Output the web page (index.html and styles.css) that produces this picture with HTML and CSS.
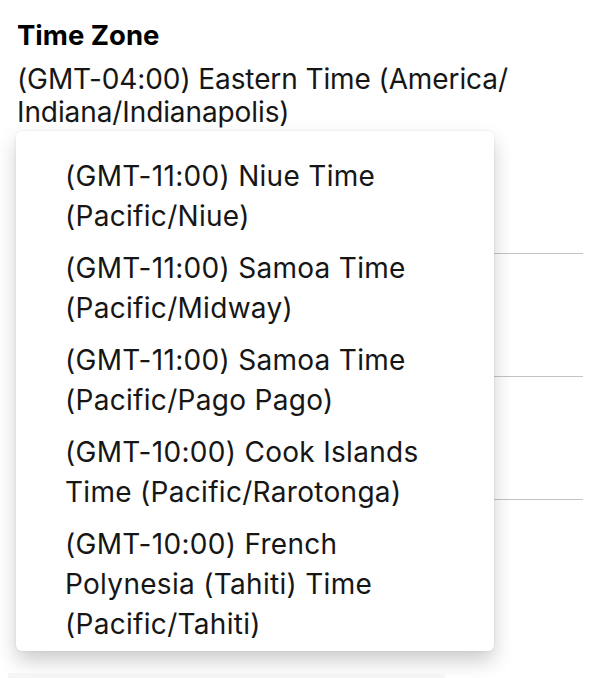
FILE: index.html
```html
<!DOCTYPE html>
<html>
<head>
<meta charset="utf-8">
<link rel="stylesheet" href="styles.css">
</head>
<body>
<div class="page">
  <h1 class="title">Time Zone</h1>
  <div class="value">(GMT-04:00) Eastern Time (America/ Indiana/Indianapolis)</div>
  <div class="fields">
    <div class="field"></div>
    <div class="field"></div>
    <div class="field"></div>
  </div>
  <ul class="menu">
    <li class="item">(GMT-11:00) Niue Time (Pacific/Niue)</li>
    <li class="item">(GMT-11:00) Samoa Time (Pacific/Midway)</li>
    <li class="item">(GMT-11:00) Samoa Time (Pacific/Pago Pago)</li>
    <li class="item">(GMT-10:00) Cook Islands Time (Pacific/Rarotonga)</li>
    <li class="item">(GMT-10:00) French Polynesia (Tahiti) Time (Pacific/Tahiti)</li>
  </ul>
  <div class="bottom-strip"></div>
</div>
</body>
</html>
```
FILE: styles.css
```css
html, body {
  margin: 0;
  padding: 0;
  background: #fff;
}
body {
  font-family: Inter, "Noto Sans", sans-serif;
  color: #111;
  width: 596px;
  height: 678px;
  overflow: hidden;
}
.page {
  position: relative;
  height: 678px;
  padding-left: 17px;
  box-sizing: border-box;
}
.title {
  margin: 0;
  padding-top: 19px;
  font-size: 27.5px;
  font-weight: 700;
  line-height: 32px;
  color: #000;
}
.value {
  margin-top: 12px;
  font-size: 28px;
  font-weight: 400;
  letter-spacing: -0.1px;
  line-height: 33px;
  width: 540px;
  color: #161616;
}
.fields {
  width: 566px;
  margin-top: 2px;
}
.field {
  height: 122px;
  border-bottom: 1px solid #c4c4c4;
}
.menu {
  position: absolute;
  top: 131px;
  left: 16px;
  width: 478px;
  margin: 0;
  padding: 19px 54px 1px 49px;
  box-sizing: border-box;
  list-style: none;
  background: #fff;
  border-radius: 6px;
  box-shadow: 0 10px 20px rgba(0, 0, 0, 0.2), 0 0 3px rgba(0, 0, 0, 0.08);
}
.item {
  padding: 6px 0;
  font-size: 28px;
  line-height: 40px;
  color: #161616;
  letter-spacing: 0.3px;
}
.bottom-strip {
  position: absolute;
  left: 8px;
  bottom: 0;
  width: 437px;
  height: 5px;
  background: #f5f5f5;
}
```
